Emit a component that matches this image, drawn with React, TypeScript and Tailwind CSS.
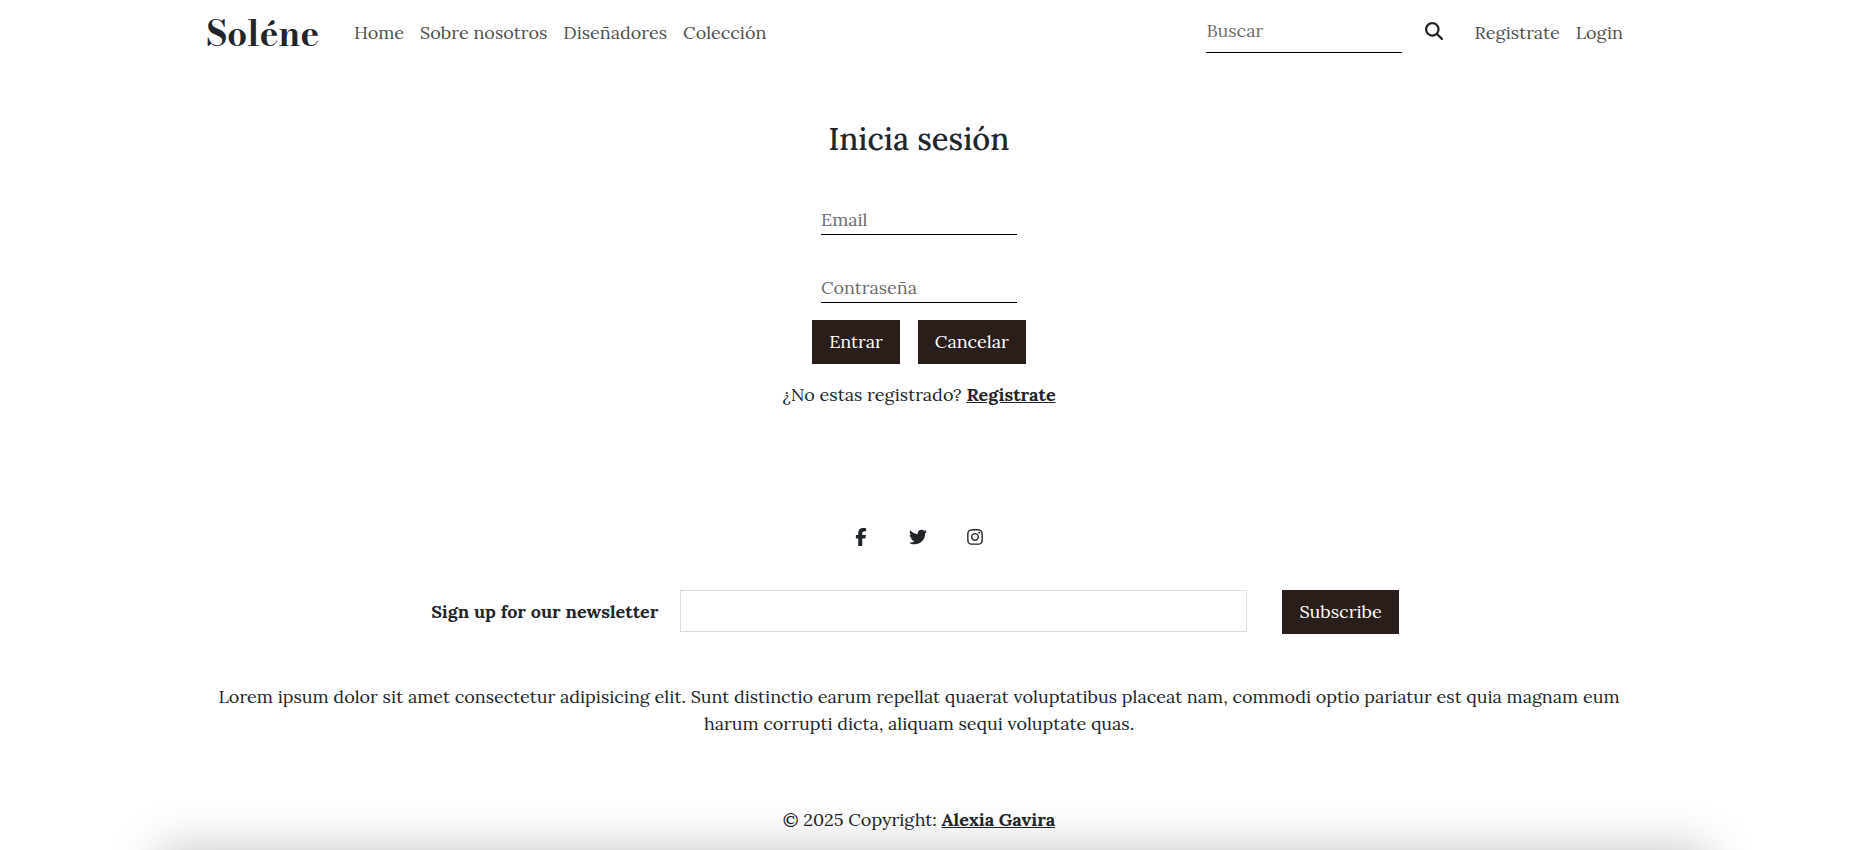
import { FaFacebookF, FaInstagram, FaMagnifyingGlass, FaTwitter } from "react-icons/fa6";

const navLinks = ["Home", "Sobre nosotros", "Diseñadores", "Colección"];
const accountLinks = ["Registrate", "Login"];

const socials = [
  { name: "Facebook", Icon: FaFacebookF },
  { name: "Twitter", Icon: FaTwitter },
  { name: "Instagram", Icon: FaInstagram },
];

const buttonClass = "h-11 bg-[#291e19] px-[17px] pb-0.5 text-white";
const fieldClass =
  "w-[196px] rounded-none border-b border-black bg-transparent text-[#212529] outline-none placeholder:text-[#6c6c6c]";

function Header() {
  return (
    <header className="mx-auto w-full max-w-[1426px] py-2">
      <nav className="flex h-[51px] items-center text-[#505050]">
        <a
          href="#"
          className="mr-[35px] font-['Bodoni_Moda','Libre_Bodoni','Playfair_Display','Liberation_Serif',serif] text-[35px] leading-[51px] font-bold text-[#212529]"
        >
          Soléne
        </a>
        <ul className="flex gap-4 pb-[3px]">
          {navLinks.map((label) => (
            <li key={label}>
              <a href="#">{label}</a>
            </li>
          ))}
        </ul>
        <form className="ml-auto flex self-start" onSubmit={(e) => e.preventDefault()}>
          <input type="search" aria-label="Buscar" placeholder="Buscar" className={`${fieldClass} h-[45px]`} />
          <button type="submit" aria-label="Buscar" className="h-[45px] px-[23px] text-[#212529]">
            <FaMagnifyingGlass className="size-[18px]" />
          </button>
        </form>
        <ul className="flex gap-4 pr-[9px] pb-[3px] pl-2">
          {accountLinks.map((label) => (
            <li key={label}>
              <a href="#">{label}</a>
            </li>
          ))}
        </ul>
      </nav>
    </header>
  );
}

function Login() {
  return (
    <main className="flex flex-col items-center pt-[50px]">
      <h1 className="mb-[45px] text-[31px] leading-[43px] font-medium">Inicia sesión</h1>
      <form className="flex flex-col items-center" onSubmit={(e) => e.preventDefault()}>
        <input type="email" aria-label="Email" placeholder="Email" className={`${fieldClass} mb-[38px] h-[30px]`} />
        <input type="password" aria-label="Contraseña" placeholder="Contraseña" className={`${fieldClass} mb-[17px] h-[30px]`} />
        <div className="flex gap-[18px]">
          <button type="submit" className={buttonClass}>
            Entrar
          </button>
          <button type="reset" className={buttonClass}>
            Cancelar
          </button>
        </div>
      </form>
      <p className="mt-[17px]">
        ¿No estas registrado?{" "}
        <a href="#" className="font-bold underline">
          Registrate
        </a>
      </p>
    </main>
  );
}

function Footer() {
  return (
    <footer className="mx-auto flex w-full max-w-[1426px] flex-col items-center px-2 pt-[115px] pb-[17px] text-center">
      <ul className="flex h-[27px] items-center gap-[39px] pr-0.5">
        {socials.map(({ name, Icon }) => (
          <li key={name}>
            <a href="#" aria-label={name}>
              <Icon className="size-[18px]" />
            </a>
          </li>
        ))}
      </ul>
      <form className="mt-10 flex items-start pr-2" onSubmit={(e) => e.preventDefault()}>
        <label htmlFor="newsletter" className="mr-[22px] leading-[44px] font-bold">
          Sign up for our newsletter
        </label>
        <input
          id="newsletter"
          type="email"
          className="mr-[35px] h-[42px] w-[567px] border border-[#d8dde2] px-3 outline-none"
        />
        <button type="submit" className={buttonClass}>
          Subscribe
        </button>
      </form>
      <p className="mt-[49px]">
        Lorem ipsum dolor sit amet consectetur adipisicing elit. Sunt distinctio earum repellat quaerat voluptatibus
        placeat nam, commodi optio pariatur est quia magnam eum harum corrupti dicta, aliquam sequi voluptate quas.
      </p>
      <p className="mt-[69px]">
        © 2025 Copyright:{" "}
        <a href="#" className="font-bold underline">
          Alexia Gavira
        </a>
      </p>
    </footer>
  );
}

export default function App() {
  return (
    <div className="relative min-h-screen overflow-hidden bg-white pr-[11px] font-['Lora','DejaVu_Serif_Condensed','DejaVu_Serif',serif] text-[18px] leading-[27px] text-[#212529]">
      <Header />
      <Login />
      <Footer />
      <div
        aria-hidden="true"
        className="pointer-events-none absolute top-full right-[140px] left-[158px] h-20 shadow-[0_0_50px_rgba(0,0,0,0.24)]"
      />
    </div>
  );
}
